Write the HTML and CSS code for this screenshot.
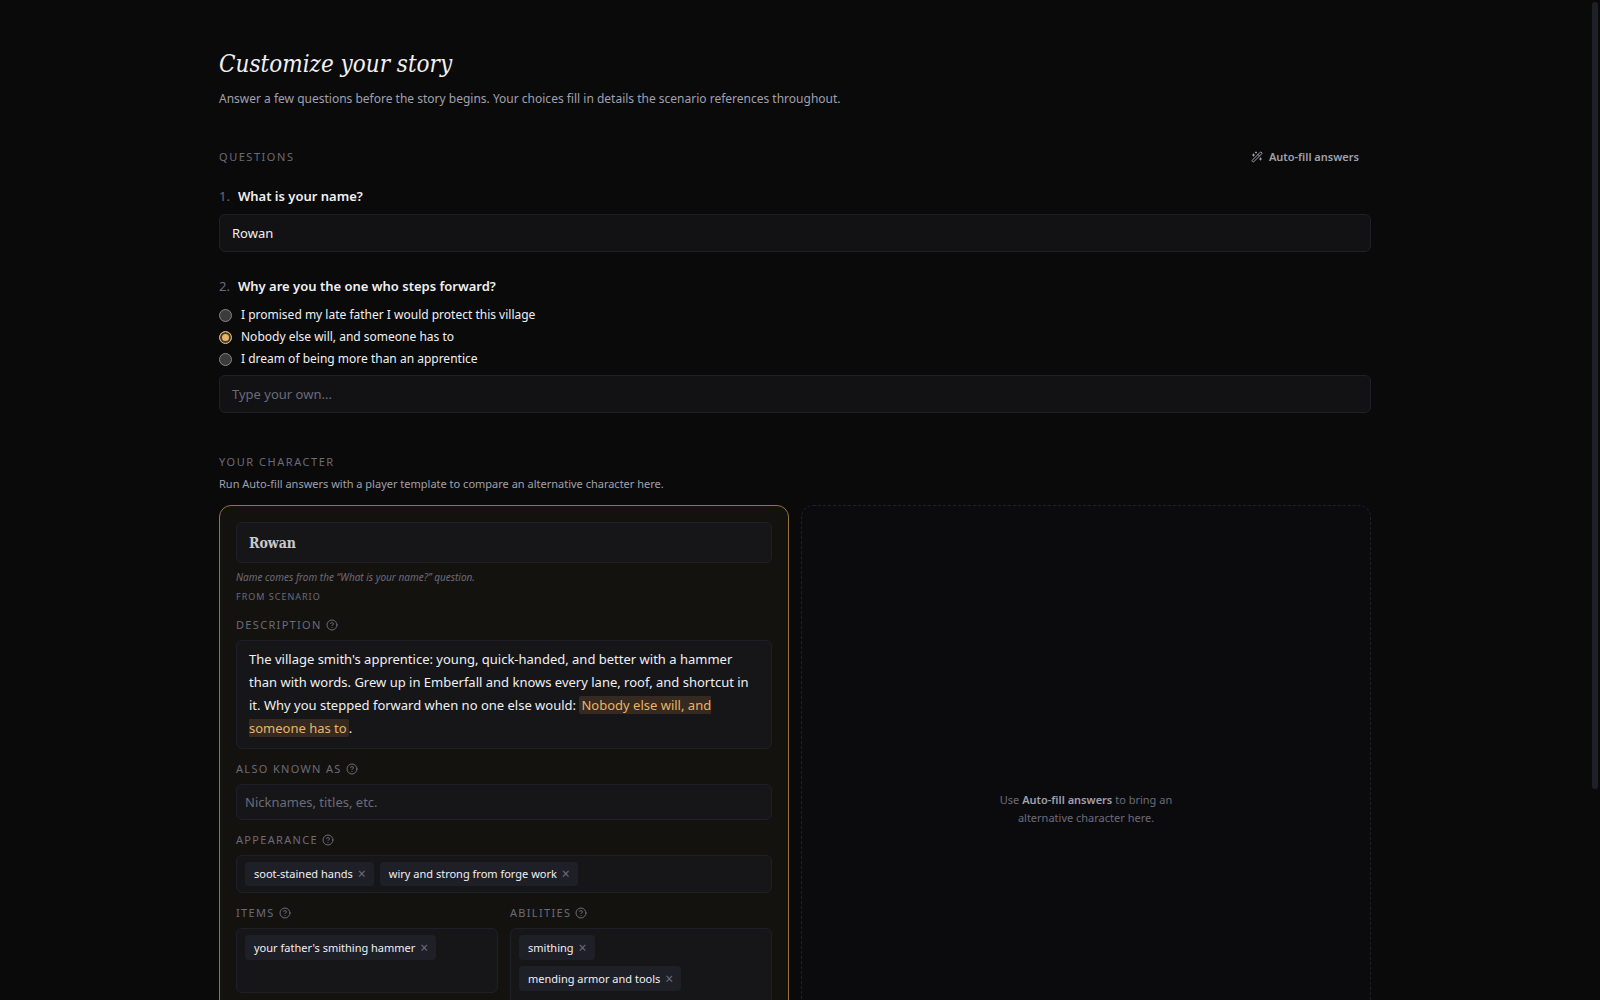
FILE: index.html
```html
<!DOCTYPE html>
<html lang="en">
<head>
	<meta charset="UTF-8">
	<meta name="viewport" content="width=device-width, initial-scale=1.0">
	<title>Customize your story</title>

	<link rel="stylesheet" href="styles.css">
</head>
<body>
	<!-- shared icons -->
	<svg class="sprite" aria-hidden="true">
		<symbol id="icon-help" viewBox="0 0 24 24">
			<circle cx="12" cy="12" r="10"/>
			<path d="M9.09 9a3 3 0 0 1 5.83 1c0 2-3 3-3 3"/>
			<path d="M12 17h.01"/>
		</symbol>
		<symbol id="icon-wand" viewBox="0 0 24 24">
			<path d="m21.64 3.64-1.28-1.28a1.21 1.21 0 0 0-1.72 0L2.36 18.64a1.21 1.21 0 0 0 0 1.72l1.28 1.28a1.2 1.2 0 0 0 1.72 0L21.64 5.36a1.2 1.2 0 0 0 0-1.72"/>
			<path d="m14 7 3 3"/>
			<path d="M5 6v4"/>
			<path d="M19 14v4"/>
			<path d="M10 2v2"/>
			<path d="M7 8H3"/>
			<path d="M21 16h-4"/>
			<path d="M11 3H9"/>
		</symbol>
	</svg>

	<div class="page">
		<main class="container">
			<header>
				<h1 class="title">Customize your story</h1>
				<p class="subtitle">Answer a few questions before the story begins. Your choices fill in details the scenario references throughout.</p>
			</header>

			<section class="questions">
				<div class="section-head">
					<h2 class="section-label">Questions</h2>
					<button class="autofill" type="button">
						<svg class="icon"><use href="#icon-wand"/></svg>
						Auto-fill answers
					</button>
				</div>

				<div class="question">
					<label class="question-text" for="q-name"><span class="num">1.</span>What is your name?</label>
					<input class="field" id="q-name" type="text" value="Rowan">
				</div>

				<fieldset class="question">
					<legend class="question-text"><span class="num">2.</span>Why are you the one who steps forward?</legend>
					<div class="options">
						<label class="option"><input type="radio" name="why">I promised my late father I would protect this village</label>
						<label class="option"><input type="radio" name="why" checked>Nobody else will, and someone has to</label>
						<label class="option"><input type="radio" name="why">I dream of being more than an apprentice</label>
					</div>
					<input class="field" type="text" placeholder="Type your own..." aria-label="Type your own">
				</fieldset>
			</section>

			<section class="character">
				<h2 class="section-label">Your character</h2>
				<p class="hint">Run Auto-fill answers with a player template to compare an alternative character here.</p>

				<div class="compare">
					<article class="card">
						<input class="field name-field" type="text" value="Rowan" aria-label="Character name" readonly>
						<p class="note">Name comes from the “What is your name?” question.</p>
						<p class="source">From scenario</p>

						<div class="group">
							<h3 class="group-label">Description <svg class="icon"><use href="#icon-help"/></svg></h3>
							<div class="box description">The village smith's apprentice: young, quick-handed, and better with a hammer than with words. Grew up in Emberfall and knows every lane, roof, and shortcut in it. Why you stepped forward when no one else would: <mark>Nobody else will, and someone has to</mark>.</div>
						</div>

						<div class="group">
							<label class="group-label" for="aka">Also known as <svg class="icon"><use href="#icon-help"/></svg></label>
							<input class="box aka" id="aka" type="text" placeholder="Nicknames, titles, etc.">
						</div>

						<div class="group">
							<h3 class="group-label">Appearance <svg class="icon"><use href="#icon-help"/></svg></h3>
							<div class="box chips">
								<span class="chip">soot-stained hands<button type="button" aria-label="Remove">×</button></span>
								<span class="chip">wiry and strong from forge work<button type="button" aria-label="Remove">×</button></span>
							</div>
						</div>

						<div class="pair">
							<div class="group">
								<h3 class="group-label">Items <svg class="icon"><use href="#icon-help"/></svg></h3>
								<div class="box chips stacked">
									<span class="chip">your father's smithing hammer<button type="button" aria-label="Remove">×</button></span>
								</div>
							</div>
							<div class="group">
								<h3 class="group-label">Abilities <svg class="icon"><use href="#icon-help"/></svg></h3>
								<div class="box chips stacked taller">
									<span class="chip">smithing<button type="button" aria-label="Remove">×</button></span>
									<span class="chip">mending armor and tools<button type="button" aria-label="Remove">×</button></span>
								</div>
							</div>
						</div>
					</article>

					<aside class="empty">
						<p>Use <strong>Auto-fill answers</strong> to bring an alternative character here.</p>
					</aside>
				</div>
			</section>
		</main>
	</div>
	<div class="scrollbar" aria-hidden="true"><div class="thumb"></div></div>
</body>
</html>
```
FILE: styles.css
```css
* {
	box-sizing: border-box;
}

body {
	display: flex;
	height: 100vh;
	margin: 0;
	background: #0a0a0a;
	color: #f0f0f4;
	font-family: "Noto Sans", "Open Sans", sans-serif;
	font-size: 13px;
	line-height: 20px;
}

h1, h2, h3, p, fieldset, legend {
	margin: 0;
	padding: 0;
	border: 0;
	font-weight: 400;
}

input, button {
	font: inherit;
	color: inherit;
}

.sprite {
	display: none;
}

.icon {
	width: 12px;
	height: 12px;
	fill: none;
	stroke: currentColor;
	stroke-width: 2;
	stroke-linecap: round;
	stroke-linejoin: round;
}

.page {
	flex: 1;
	overflow-y: auto;
	scrollbar-width: none;
}

.scrollbar {
	width: 10px;
	padding: 2px;
}

.thumb {
	height: 79%;
	border-radius: 3px;
	background: #1f1f28;
}

.container {
	max-width: 1200px;
	margin: 0 auto;
	padding: 48px 24px 146px;
}

.title {
	font-family: "DejaVu Serif Condensed", "DejaVu Serif", serif;
	font-style: italic;
	font-size: 24px;
	line-height: 32px;
}

.subtitle {
	margin-top: 9px;
	font-size: 12px;
	color: #a0a0ae;
}

.section-head {
	display: flex;
	justify-content: space-between;
	align-items: center;
	margin-top: 33px;
}

.section-label {
	font-size: 11px;
	line-height: 16px;
	letter-spacing: 0.14em;
	text-transform: uppercase;
	color: #6b6b7a;
}

.autofill {
	display: flex;
	align-items: center;
	gap: 6px;
	height: 30px;
	padding: 0 12px;
	border: 0;
	background: none;
	font-size: 11px;
	font-weight: 600;
	color: #a0a0ae;
}

.question {
	margin-top: 24px;
}

.section-head + .question {
	margin-top: 14px;
}

.question-text {
	display: block;
	margin-bottom: 8px;
	font-weight: 600;
}

.num {
	margin-right: 8px;
	font-weight: 400;
	color: #6b6b7a;
}

.field,
.box {
	display: block;
	width: 100%;
	border: 1px solid #1f1f28;
	border-radius: 6px;
	background: #121215;
}

.field {
	height: 38px;
	padding: 0 12px;
}

::placeholder {
	color: #6b6b7a;
	opacity: 1;
}

.options {
	margin-bottom: 5px;
}

.option {
	display: flex;
	align-items: center;
	gap: 9px;
	height: 22px;
	font-size: 12px;
}

.option input {
	appearance: none;
	width: 13px;
	height: 13px;
	margin: 0;
	border: 1px solid #858585;
	border-radius: 50%;
	background: #3b3b3b;
}

.option input:checked {
	border-color: #e9b567;
	background: #e9b567;
	box-shadow: inset 0 0 0 2px #3b3b3b;
}

.character {
	margin-top: 41px;
}

.hint {
	margin: 4px 0 11px;
	font-size: 11px;
	color: #a0a0ae;
}

.compare {
	display: grid;
	grid-template-columns: 1fr 1fr;
	gap: 12px;
}

.card {
	min-height: 608px;
	padding: 16px;
	border: 1px solid #937443;
	border-radius: 12px;
	background: #14120f;
}

.card .field,
.card .box {
	background: #161618;
}

.card .name-field {
	height: 41px;
	font-family: "DejaVu Serif Condensed", "DejaVu Serif", serif;
	font-size: 14px;
	font-weight: 700;
	color: #c9c9ce;
}

.note {
	margin-top: 6px;
	font-size: 10px;
	line-height: 16px;
	font-style: italic;
	color: #6b6b7a;
}

.source {
	margin-top: 4px;
	font-size: 9px;
	line-height: 16px;
	letter-spacing: 1px;
	text-transform: uppercase;
	color: #6b6b7a;
}

.group {
	margin-top: 11px;
}

.group-label {
	display: flex;
	align-items: center;
	gap: 4px;
	margin-bottom: 7px;
	font-size: 11px;
	line-height: 17px;
	letter-spacing: 0.12em;
	text-transform: uppercase;
	color: #6b6b7a;
}

.description {
	padding: 7px 12px 8px;
	line-height: 23px;
}

mark {
	padding: 0 2px;
	border-radius: 2px;
	background: #352920;
	color: #e9b567;
}

.aka {
	height: 36px;
	padding: 0 8px;
}

.chips {
	display: flex;
	flex-wrap: wrap;
	gap: 6px;
	padding: 6px 8px;
}

.stacked {
	flex-flow: column nowrap;
	align-items: flex-start;
	min-height: 65px;
}

.taller {
	min-height: 96px;
}

.chip {
	display: flex;
	align-items: center;
	gap: 5px;
	height: 24px;
	padding: 0 8px 0 9px;
	border-radius: 4px;
	background: #1f1f28;
	font-size: 11px;
}

.stacked .chip {
	height: 25px;
}

.chip button {
	padding: 0;
	border: 0;
	background: none;
	font-size: 14px;
	line-height: 12px;
	color: #6b6b7a;
}

.pair {
	display: grid;
	grid-template-columns: 1fr 1fr;
	gap: 12px;
	align-items: start;
}

.empty {
	display: flex;
	align-items: center;
	justify-content: center;
	border: 1px dashed #1f1f28;
	border-radius: 12px;
	background: #0b0b0d;
	font-size: 11px;
	line-height: 18px;
	text-align: center;
	color: #6b6b7a;
}

.empty p {
	max-width: 190px;
}

.empty strong {
	font-weight: 600;
	color: #a0a0ae;
}
```
